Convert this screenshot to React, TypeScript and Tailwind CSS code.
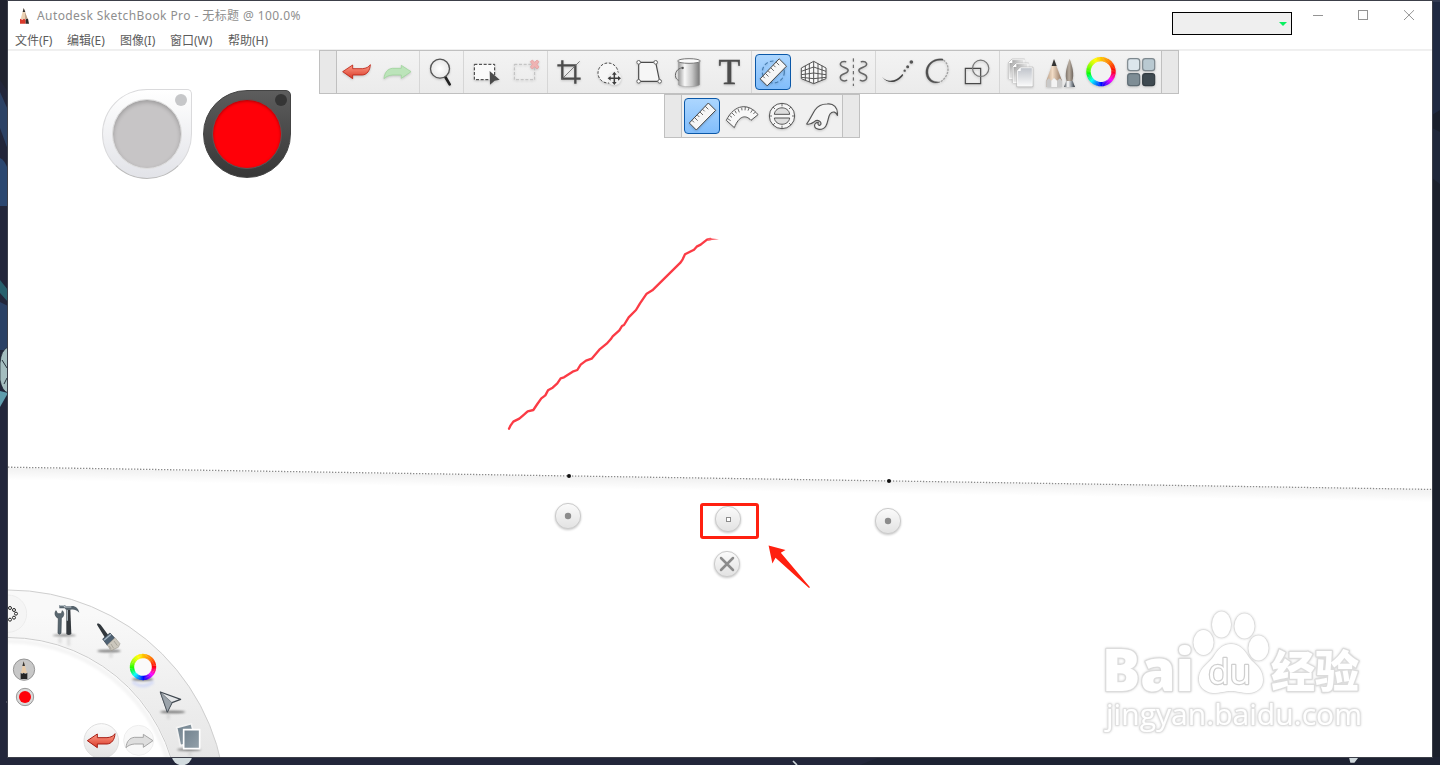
import type { ReactNode } from "react";

const hueStops: [number, number][] = [
  [0, 0], [45, 28], [90, 48], [135, 72], [180, 112], [225, 185], [270, 238], [315, 296], [360, 360],
];

function hueAt(angle: number) {
  for (let i = 1; i < hueStops.length; i++) {
    const [a1, h1] = hueStops[i];
    const [a0, h0] = hueStops[i - 1];
    if (angle <= a1) return h0 + ((angle - a0) / (a1 - a0)) * (h1 - h0);
  }
  return 0;
}

function ColorRing({ cx, cy, r, width }: { cx: number; cy: number; r: number; width: number }) {
  const steps = 60;
  return (
    <g fill="none" strokeWidth={width}>
      {Array.from({ length: steps }, (_, i) => {
        const a = (i * 360) / steps;
        const b = a + 360 / steps + 1;
        const p = (d: number) =>
          `${cx + r * Math.cos((d * Math.PI) / 180)} ${cy - r * Math.sin((d * Math.PI) / 180)}`;
        return <path key={i} d={`M${p(a)} A${r} ${r} 0 0 0 ${p(b)}`} stroke={`hsl(${hueAt(a)} 100% 50%)`} />;
      })}
    </g>
  );
}

/* Icons are drawn on shared artboards at three units per pixel; x and y pick the cell. */
function Cell({ x, y = 18, active, children }: { x: number; y?: number; active?: boolean; children: ReactNode }) {
  return (
    <button className="flex h-[42px] w-10 shrink-0 items-center justify-center">
      <span
        className={
          active
            ? "flex size-9 items-center justify-center rounded-[4px] border border-[#0b58a8] bg-linear-to-b from-[#acd6fe] to-[#81bdfb]"
            : "flex size-9 items-center justify-center"
        }
      >
        <svg viewBox={`${x} ${y} 120 126`} className="h-[42px] w-10 shrink-0 drop-shadow-[0_1px_1px_rgba(0,0,0,0.18)]">
          {children}
        </svg>
      </span>
    </button>
  );
}

function Section({ className, children }: { className: string; children: ReactNode }) {
  return <div className={`flex shrink-0 border-l ${className}`}>{children}</div>;
}

function Defs() {
  return (
    <svg className="absolute size-0">
      <defs>
        <linearGradient id="red" x2="0" y2="1">
          <stop stopColor="#ff9c88" />
          <stop offset="1" stopColor="#d83a28" />
        </linearGradient>
        <linearGradient id="metal">
          <stop stopColor="#999" />
          <stop offset=".3" stopColor="#f8f8f8" />
          <stop offset=".65" stopColor="#c5c5c5" />
          <stop offset="1" stopColor="#777" />
        </linearGradient>
        <linearGradient id="page" x2="1" y2="1">
          <stop stopColor="#8d8d8d" />
          <stop offset=".45" stopColor="#dcdcdc" />
          <stop offset="1" stopColor="#fff" />
        </linearGradient>
        <linearGradient id="pageFront" x2="0" y2="1">
          <stop stopColor="#bfc3ca" />
          <stop offset="1" stopColor="#fafafa" />
        </linearGradient>
        <linearGradient id="wood">
          <stop stopColor="#b89e86" />
          <stop offset=".4" stopColor="#f2dcc6" />
          <stop offset="1" stopColor="#8d715c" />
        </linearGradient>
        <linearGradient id="hair">
          <stop stopColor="#7d736a" />
          <stop offset=".45" stopColor="#b9ada0" />
          <stop offset="1" stopColor="#6d635b" />
        </linearGradient>
        <linearGradient id="chrome">
          <stop stopColor="#3e454d" />
          <stop offset=".35" stopColor="#fff" />
          <stop offset=".7" stopColor="#8a9199" />
          <stop offset="1" stopColor="#2c3238" />
        </linearGradient>
        <linearGradient id="ball" x2="0" y2="1">
          <stop stopColor="#fbfbfb" />
          <stop offset="1" stopColor="#e2e2e2" />
        </linearGradient>
        <linearGradient id="band" x2="0" y2=".45">
          <stop stopColor="#f9f9f9" />
          <stop offset="1" stopColor="#e2e2e2" />
        </linearGradient>
        <linearGradient id="photo" x2="1" y2="1">
          <stop stopColor="#71828e" />
          <stop offset="1" stopColor="#94a1aa" />
        </linearGradient>
        <linearGradient id="edge" x2="0" y2="1">
          <stop stopColor="#000" stopOpacity=".055" />
          <stop offset="1" stopColor="#000" stopOpacity="0" />
        </linearGradient>
        <radialGradient id="lens">
          <stop stopColor="#fff" />
          <stop offset="1" stopColor="#e8e8e8" />
        </radialGradient>
        <filter id="soft" x="-20%" y="-50%" width="140%" height="200%">
          <feGaussianBlur stdDeviation="2.5" />
        </filter>
        <filter id="haze" x="-10%" y="-10%" width="120%" height="120%">
          <feGaussianBlur stdDeviation=".8" />
        </filter>
      </defs>
    </svg>
  );
}

function Ruler({ dx = 0, dy = 0 }: { dx?: number; dy?: number }) {
  return (
    <g transform={`translate(${dx} ${dy})`} stroke="#454545" strokeLinejoin="round">
      <path d="M268 234 L325 174 L347 196 L289 255Z" fill="#f6f6f6" strokeWidth="3" />
      <path
        d="M276 226l6 6 M284 218l9 9 M292 210l6 6 M300 201l9 9 M308 193l6 6 M316 184l9 9"
        fill="none"
        strokeWidth="2.4"
      />
    </g>
  );
}

const leftArrow = "M98 80 L128 60 V71 H157 C169 70 177 66 181 59 C180 77 171 89 157 90 H128 V101Z";
const rightArrow = "M303 80 L274 61 V70 H247 C233 72 224 81 222 101 C229 94 237 91 248 90 H274 V100Z";

function MainToolbar() {
  return (
    <div className="absolute left-[311px] top-0 flex h-11 w-[860px] border border-[#c0c0c0] bg-linear-to-b from-[#f3f3f3] to-[#ebebeb]">
      <div className="w-4 shrink-0 bg-[#e8e8e8]" />
      <Section className="w-[83px] border-[#c0c0c0]">
        <Cell x={81}>
          <path d={leftArrow} fill="url(#red)" stroke="#bd2213" strokeWidth="2.5" strokeLinejoin="round" />
        </Cell>
        <Cell x={201}>
          <path d={rightArrow} fill="#bce4ba" stroke="#a0d59e" strokeWidth="2.5" strokeLinejoin="round" />
        </Cell>
      </Section>
      <Section className="w-[44px] border-[#d6d6d6] pl-px">
        <Cell x={333}>
          <path d="M406 96 L419 118" stroke="#222" strokeWidth="8" strokeLinecap="round" />
          <circle cx="390" cy="71" r="28.5" fill="url(#lens)" stroke="#555" strokeWidth="4" />
        </Cell>
      </Section>
      <Section className="w-[84px] border-[#d6d6d6] pl-px">
        <Cell x={465}>
          <path d="M493 58H554V104H493Z" fill="#fafafa" stroke="#333" strokeWidth="3" strokeDasharray="9 5" />
          <path d="M539 78 L569 104 L554 107 L540 119Z" fill="#4b4b4b" />
        </Cell>
        <Cell x={585}>
          <path d="M613 58H674V104H613Z" fill="none" stroke="#bdbdbd" strokeWidth="3" strokeDasharray="9 5" />
          <path
            d="M661 50l6-5 7 7 7-7 6 5-6 8 6 8-6 6-7-7-7 7-6-6 6-8Z"
            fill="#efb3b3"
            stroke="#e29a9a"
            strokeWidth="2"
          />
        </Cell>
      </Section>
      <Section className="w-[204px] border-[#d6d6d6] pl-px">
        <Cell x={717}>
          <path d="M757 46V101H812 M742 61H796V116" fill="none" stroke="#4b4b4b" strokeWidth="7" />
          <path d="M757 101L809 49" stroke="#666" strokeWidth="2.5" />
        </Cell>
        <Cell x={-33}>
          <circle cx="24" cy="84" r="30" fill="#f7f7f7" stroke="#444" strokeWidth="3" strokeDasharray="8 5" />
          <circle cx="43" cy="100" r="21" fill="#efefef" />
          <path d="M43 86V114M29 100H57" stroke="#3e3e3e" strokeWidth="4.5" />
          <path d="M43 80l7 9H36Z M43 120l7-9H36Z M23 100l9-7V107Z M63 100l-9-7V107Z" fill="#3e3e3e" />
        </Cell>
        <Cell x={87}>
          <path d="M116 52H167L179 109H116Z" fill="#f6f6f6" stroke="#4b4b4b" strokeWidth="3.5" />
          <g fill="#fff" stroke="#666" strokeWidth="3">
            <circle cx="116" cy="52" r="5.5" />
            <circle cx="167" cy="52" r="5.5" />
            <circle cx="179" cy="109" r="5.5" />
            <circle cx="116" cy="109" r="5.5" />
          </g>
        </Cell>
        <Cell x={207}>
          <path d="M235 50V119C243 127 290 127 299 119V50Z" fill="url(#metal)" stroke="#999" strokeWidth="1.5" />
          <ellipse cx="267" cy="48" rx="34" ry="7" fill="#fafafa" stroke="#777" strokeWidth="3" />
          <path d="M248 68C231 70 224 84 227 96C228 101 231 104 236 106" fill="none" stroke="#666" strokeWidth="3" />
          <circle cx="248" cy="69" r="3.5" fill="#555" />
        </Cell>
        <Cell x={327}>
          <text
            x="388"
            y="117"
            textAnchor="middle"
            fontSize="107"
            fill="#4d4d4d"
            stroke="#4d4d4d"
            strokeWidth="1.5"
            className="font-['Liberation_Serif',serif]"
          >
            T
          </text>
        </Cell>
      </Section>
      <Section className="w-[124px] border-[#d6d6d6] pl-px">
        <Cell x={459} active>
          <circle cx="520" cy="81" r="33" fill="none" stroke="#467caf" strokeWidth="3.5" strokeDasharray="11 7" />
          <Ruler dx={212.5} dy={-132.5} />
        </Cell>
        <Cell x={579}>
          <path d="M604 69L641 49L678 69V101L641 116L604 101Z" fill="#f8f8f8" stroke="#555" strokeWidth="3" />
          <path
            d="M641 49V116 M616 62V106 M628 56V111 M654 56V111 M666 62V106 M604 79L641 66L678 79 M604 89L641 84L678 89 M604 97L641 101L678 97"
            fill="none"
            stroke="#555"
            strokeWidth="3"
          />
        </Cell>
        <Cell x={699}>
          <g fill="none" stroke="#666" strokeLinecap="round">
            <path d="M737 50C720 48 716 60 728 65C740 70 749 73 742 81C736 88 719 86 721 99C722 106 731 110 740 106" strokeWidth="4.5" />
            <path d="M784 50C801 48 805 60 793 65C781 70 772 73 779 81C785 88 802 86 800 99C799 106 790 110 781 106" strokeWidth="4.5" />
            <path d="M760 40V123" strokeWidth="3" strokeDasharray="10 9" strokeLinecap="butt" stroke="#555" />
          </g>
        </Cell>
      </Section>
      <Section className="w-[124px] border-[#d6d6d6] pl-px">
        <Cell x={-9}>
          <path d="M6 95C22 115 50 109 67 87L70 90C52 117 21 118 6 95Z" fill="#444" />
          <g fill="#555">
            <circle cx="74" cy="77" r="3.5" />
            <circle cx="83" cy="65" r="4.5" />
            <circle cx="94" cy="51" r="5.5" />
          </g>
        </Cell>
        <Cell x={111}>
          <path d="M189 42C157 37 134 62 138 87C141 108 160 120 180 111C159 112 146 102 144 84C142 61 160 42 189 46Z" fill="#505050" stroke="#505050" />
          <path d="M190 45C210 58 210 92 181 111" fill="none" stroke="#a2a2a2" strokeWidth="4" strokeDasharray="7 3" />
        </Cell>
        <Cell x={231}>
          <path d="M256 70H302V116H256Z" fill="none" stroke="#484848" strokeWidth="3.5" />
          <circle cx="302" cy="70" r="24.5" fill="none" stroke="#777" strokeWidth="3.5" />
        </Cell>
      </Section>
      <Section className="w-[162px] border-[#d6d6d6] pl-px">
        <Cell x={363}>
          <g stroke="#fff" strokeWidth="3">
            <path d="M387 54L397 44H432V100H387Z" fill="url(#page)" />
            <path d="M399 66L409 56H444V112H399Z" fill="url(#page)" />
            <path d="M412 78L422 68H457V124H412Z" fill="url(#pageFront)" />
          </g>
          <g fill="none" stroke="#a9a9a9" strokeWidth="1.5">
            <path d="M385 101V53L396 42H434" />
            <path d="M397 113V65L408 54H446" />
            <path d="M410 125V77L421 66H459V125Z" />
          </g>
          <path d="M387 54L397 44V54Z M399 66L409 56V66Z M412 78L422 68V78Z" fill="#fff" />
        </Cell>
        <Cell x={483}>
          <path d="M499 126V107L522 44L546 107V126Z" fill="url(#wood)" />
          <path d="M515 63L522 42L530 63Z" fill="#333" />
          <path d="M499 107L506 100L514 107L522 99L531 107L540 100L546 107V126H499Z" fill="#c9c9c9" />
          <path d="M514 107L522 99L531 107V126H514Z" fill="#f3f3f3" />
          <path d="M569 41C577 64 584 86 577 109H560C553 86 561 64 569 41Z" fill="url(#hair)" />
          <path d="M559 108H578L585 126H552Z" fill="url(#chrome)" />
        </Cell>
        <Cell x={603}>
          <circle cx="663" cy="80" r="33" fill="#f2f2f2" />
          <ColorRing cx={663} cy={80} r={37.5} width={13} />
        </Cell>
        <Cell x={723}>
          <g strokeWidth="3.5">
            <rect x="743" y="41" width="36" height="36" rx="8" fill="#dce6ec" stroke="#7d888e" />
            <rect x="788" y="41" width="36" height="36" rx="8" fill="#b9c9d1" stroke="#7d888e" />
            <rect x="743" y="86" width="36" height="36" rx="8" fill="#7e8d95" stroke="#5e6c74" />
            <rect x="788" y="86" width="36" height="36" rx="8" fill="#3f4a51" stroke="#333c42" />
          </g>
        </Cell>
      </Section>
      <div className="grow border-l border-[#c0c0c0] bg-[#e8e8e8]" />
    </div>
  );
}

function GuideToolbar() {
  return (
    <div className="absolute left-[656px] top-11 flex h-11 w-[196px] border border-[#c0c0c0] bg-[#f0f0f0]">
      <div className="w-4 shrink-0 bg-[#e8e8e8]" />
      <Section className="w-[161px] border-[#c0c0c0]">
        <Cell x={246} y={150} active>
          <Ruler />
        </Cell>
        <Cell x={366} y={150}>
          <path
            d="M379 226C403 177 446 173 474 209L453 226C437 208 417 212 403 248Z"
            fill="#f8f8f8"
            stroke="#555"
            strokeWidth="3"
            strokeLinejoin="round"
          />
          <path
            d="M383 221l9 6 M389 212l7 5 M396 204l8 8 M405 197l4 8 M414 192l4 10 M425 188l1 8 M436 186l-1 10 M447 189l-3 8 M458 194l-6 9 M466 201l-6 6"
            stroke="#555"
            strokeWidth="2.6"
          />
        </Cell>
        <Cell x={486} y={150}>
          <circle cx="546" cy="213" r="38" fill="#f6f6f6" stroke="#555" strokeWidth="3" />
          <path d="M523 208C526 182 566 182 569 208Z M523 219C526 244 566 244 569 219Z" fill="#ddd" stroke="#555" strokeWidth="3" />
          <path
            d="M546 175v9 M546 242v9 M508 213h8 M576 213h8 M519 186l6 6 M573 186l-6 6 M519 240l6-6 M573 240l-6-6"
            stroke="#555"
            strokeWidth="2.6"
          />
        </Cell>
        <Cell x={606} y={150}>
          <path
            d="M620 237C631 222 637 207 645 195C654 182 667 177 681 177C700 174 715 188 712 211C709 202 699 196 690 207C681 219 687 254 657 253C639 251 640 232 655 232C652 240 658 244 662 239C666 229 653 222 643 230C635 236 628 240 620 237Z"
            fill="#f4f4f4"
            stroke="#555"
            strokeWidth="3.5"
            strokeLinejoin="round"
          />
        </Cell>
      </Section>
      <div className="grow border-l border-[#c0c0c0] bg-[#e8e8e8]" />
    </div>
  );
}

function Wheel() {
  return (
    <g>
      <circle cx="8" cy="808" r="194.5" fill="none" stroke="url(#band)" strokeWidth="47" />
      <circle cx="8" cy="808" r="218" fill="none" stroke="#cfcfcf" />
      <circle cx="8" cy="808" r="170.5" fill="#fff" stroke="#cdcdcd" />
      <circle cx="8" cy="808" r="167" fill="none" stroke="#000" strokeOpacity=".04" strokeWidth="5" filter="url(#haze)" />
      <g transform="translate(0 580) scale(.333333)">
        <circle cx="24" cy="101" r="56" fill="#f5f5f5" stroke="#ececec" strokeWidth="3" />
        <g fill="#fff" stroke="#222" strokeWidth="3">
          <circle cx="30" cy="84" r="4.5" />
          <circle cx="42" cy="90" r="4.5" />
          <circle cx="48" cy="101" r="4.5" />
          <circle cx="42" cy="113" r="4.5" />
          <circle cx="30" cy="119" r="4.5" />
        </g>

        <g fill="#000" filter="url(#soft)" opacity=".5">
          <ellipse cx="193" cy="166" rx="35" ry="3" />
          <ellipse cx="327" cy="213" rx="36" ry="4" />
          <ellipse cx="428" cy="298" rx="32" ry="5" />
          <ellipse cx="518" cy="396" rx="38" ry="4" />
          <ellipse cx="567" cy="509" rx="36" ry="4" />
        </g>
        <g opacity=".35" fill="none" strokeWidth="10" filter="url(#soft)">
          <path d="M180 172v18M206 172v25M333 217v16M505 402v16M570 515v12" stroke="#b8b8b8" />
          <path d="M398 305Q428 330 460 305" stroke="#a8b8ff" />
        </g>

        <path
          d="M168 92L173 101L184 101L187 92C194 99 192 109 184 115L183 160Q179 165 174 160L175 115C164 110 163 98 168 92Z"
          fill="#5a6871"
          stroke="#36424a"
          strokeWidth="2"
        />
        <path d="M199 88H211L214 162Q206 168 199 162Z" fill="#34393e" />
        <path d="M202 90V122" stroke="#a9b4bb" strokeWidth="4" />
        <path d="M178 75H194L198 78H212C225 76 235 83 238 98C229 89 220 87 212 89H198L194 85H178Z" fill="#56636c" />
        <path d="M179 77H193V81H214" fill="none" stroke="#ccd4d9" strokeWidth="3" />

        <path d="M292 136C288 128 298 129 303 136L324 164L315 173Z" fill="#32383d" />
        <path d="M308 177L330 159L344 174L322 196Z" fill="#4e6173" stroke="#28333e" strokeWidth="2" />
        <path d="M312 181l21-18" stroke="#a9b9c6" strokeWidth="4" />
        <path d="M322 195L345 173L360 191L355 202L333 212Z" fill="#cbc7bd" stroke="#8e897f" strokeWidth="1.5" />
        <path d="M333 192l8 13M342 183l10 14M328 198l6 10" stroke="#99948a" strokeWidth="2" />

        <circle cx="429" cy="261" r="30" fill="#fafafa" />
        <ColorRing cx={429} cy={261} r={33} width={13} />

        <path d="M481 336L542 358L516 368L502 396Z" fill="#e5e7e9" stroke="#3f474f" strokeWidth="3.5" strokeLinejoin="round" />
        <path d="M481 336L516 368L502 396Z" fill="#9ba3aa" stroke="#3f474f" strokeWidth="1.5" />

        <path d="M530 443L574 431L588 485L541 497Z" fill="url(#photo)" stroke="#f3f3f3" strokeWidth="5" />
        <path d="M551 449H599V506H551Z" fill="url(#photo)" stroke="#fff" strokeWidth="5" />

        <g strokeWidth="2.5">
          <circle cx="72" cy="269" r="32" fill="#c8c8c8" stroke="#888" />
          <path d="M63 279L71 244L81 279Z" fill="#e8cba9" />
          <path d="M67 258L71 244L75 258Z" fill="#333" />
          <path d="M62 278Q67 284 71 278Q76 284 82 278V297H62Z" fill="#252525" />
          <circle cx="75" cy="351" r="26" fill="#d9d9d9" stroke="#888" />
        </g>
        <circle cx="75" cy="351" r="18" fill="#ff0008" />

        <circle cx="304" cy="483" r="52" fill="url(#ball)" stroke="#dedede" strokeWidth="3" />
        <circle cx="416" cy="481" r="45" fill="#f8f8f8" stroke="#eeeeee" strokeWidth="3" />
        <path d={leftArrow} transform="translate(164 402)" fill="url(#red)" stroke="#a61d14" strokeWidth="3" strokeLinejoin="round" />
        <path d={rightArrow} transform="translate(156 402)" fill="#dedede" stroke="#a5a5a5" strokeWidth="3" strokeLinejoin="round" />
      </g>
    </g>
  );
}

function Handle({ cx, cy, children }: { cx: number; cy: number; children: ReactNode }) {
  return (
    <g>
      <circle cx={cx} cy={cy + 1} r="13" fill="#000" opacity=".22" filter="url(#haze)" />
      <circle cx={cx} cy={cy} r="12.6" fill="url(#ball)" stroke="#cccccc" strokeWidth="1" />
      {children}
    </g>
  );
}

function Watermark() {
  const text = "font-['Open_Sans','Noto_Sans_CJK_SC',sans-serif]";
  return (
    <g
      fill="#fff"
      stroke="#dcdcdc"
      strokeLinejoin="round"
      paintOrder="stroke"
      className="drop-shadow-[0_0_1px_rgba(0,0,0,0.16)]"
    >
      <text x="1102" y="691" fontSize="59" fontWeight="800" textLength="92" lengthAdjust="spacingAndGlyphs" strokeWidth="2.6" className={text}>
        Bai
      </text>
      <text x="1271" y="687.5" fontSize="44" fontWeight="900" textLength="88" lengthAdjust="spacingAndGlyphs" strokeWidth="2.6" className="font-['Noto_Sans_CJK_SC',sans-serif]">
        经验
      </text>
      <text x="1106" y="725" fontSize="29.5" fontWeight="500" textLength="256" lengthAdjust="spacingAndGlyphs" stroke="#e0e0e0" strokeWidth="2.2" className={text}>
        jingyan.baidu.com
      </text>
      <g strokeWidth="1.6">
        <ellipse cx="1203.5" cy="642.5" rx="10" ry="12.5" />
        <ellipse cx="1221.5" cy="624.5" rx="9.5" ry="13" />
        <ellipse cx="1244.5" cy="626" rx="10" ry="12.5" />
        <ellipse cx="1258.5" cy="648" rx="10" ry="12.5" />
        <path d="M1231 644C1239 644 1244 649 1248 656C1252 663 1263 667 1263 680C1263 688 1256 693 1249 693C1241 693 1238 691 1231 691C1224 691 1221 693 1213 693C1204 692 1198 686 1199 677C1200 667 1210 663 1214 656C1218 649 1223 644 1231 644Z" />
      </g>
      <text x="1208" y="684" fontSize="34" fontWeight="500" textLength="43" lengthAdjust="spacingAndGlyphs" stroke="#cfcfcf" strokeWidth="2.4" className={text}>
        du
      </text>
    </g>
  );
}

function Drawing() {
  return (
    <svg viewBox="8 50 1424 707" className="absolute left-0 top-0 h-[707px] w-[1424px]">
      <path d="M8 50.5H1432" stroke="#f0f0f0" />
      <path
        transform="translate(490 220) scale(.333333)"
        d="M57 626L62 616L70 605L88 596L102 584L113 574L130 570L142 552L154 535L166 526L174 511L188 503L202 490L212 475L222 472L248 455L262 450L272 434L288 422L305 416L328 389L350 371L362 358L368 349L388 331L396 318L402 315L416 292L438 270L450 250L470 221L487 211L572 127L578 118L585 103L612 89L620 80L632 74L651 59L661 57"
        fill="none"
        stroke="#fb3b45"
        strokeWidth="7"
        strokeLinejoin="round"
        strokeLinecap="round"
      />
      <path d="M708 238L719 239.3L708 240.5Z" fill="#fb5b63" />

      <g transform="rotate(.895 8 467.2)">
        <rect x="8" y="468" width="1440" height="12" fill="url(#edge)" />
        <path d="M8 467.2H1440" stroke="#8c8c8c" strokeWidth="1.3" strokeDasharray="1.4 1.6" />
      </g>
      <circle cx="569" cy="476" r="2" fill="#111" />
      <circle cx="889" cy="481" r="2" fill="#111" />

      <Handle cx={568} cy={516}>
        <circle cx="568" cy="516" r="3.2" fill="#8c8c8c" />
      </Handle>
      <Handle cx={728} cy={519}>
        <rect x="726.5" y="517.5" width="4" height="4" fill="#fff" stroke="#8c8c8c" />
      </Handle>
      <Handle cx={888} cy={521}>
        <circle cx="888" cy="521" r="3.2" fill="#8c8c8c" />
      </Handle>
      <Handle cx={727} cy={564}>
        <path d="M721 558L733 570M733 558L721 570" stroke="#8c8c8c" strokeWidth="2.5" strokeLinecap="round" />
      </Handle>

      <rect x="701.5" y="504.5" width="56" height="33" rx="1.5" fill="none" stroke="#ff2010" strokeWidth="3" />
      <path d="M768.6 545.6L785.5 550L780.8 552.7L810 587.2L809 588L775.5 557.8L772.4 563.5Z" fill="#ff2010" />

      <Wheel />
      <Watermark />
    </svg>
  );
}

function Desktop() {
  return (
    <svg viewBox="0 0 1440 765" className="absolute inset-0 h-[765px] w-[1440px]">
      <rect width="1440" height="765" fill="#22263a" />
      <path d="M0 0H8V92L0 80Z" fill="#20232f" />
      <path d="M0 92L8 110V150L0 128Z" fill="#2c4265" />
      <path d="M0 158Q5 160 8 170V206H0Z" fill="#2b4770" />
      <path d="M0 280L8 290V302L0 293Z" fill="#28606d" />
      <path d="M0 302L8 306V350H0Z" fill="#2a4165" />
      <path d="M8 347Q1 350 0 363V380Q2 391 8 393Z" fill="#a4bdbf" stroke="#18202c" strokeWidth=".7" />
      <path d="M2 360l5 8M4 384l3-6" stroke="#26323c" />
      <path d="M0 391L8 393L0 407Z" fill="#5f9dad" />
      <path d="M1432 0H1440V765H1432Z" fill="#1b202c" />
      <path d="M1432 0H1440V110L1432 115Z" fill="#202a42" />
      <path d="M1432 128L1440 132V184L1432 178Z" fill="#20283b" />
      <path d="M880 757H1440V765H860Z" fill="#1d2232" />
      <path d="M1000 0H1440V2H1000Z" fill="#333b52" />
      <circle cx="182" cy="755" r="10.3" fill="#d2dbdf" />
      <path d="M793 761l4 4M1350 758l7 0-3 4h-3Z" stroke="#cfd8dc" strokeWidth="1.6" fill="#cfd8dc" />
      <circle cx="7.5" cy="702" r="1" fill="#aaa" />
    </svg>
  );
}

const menus = [
  { label: "文件(F)", width: "w-[52px]" },
  { label: "编辑(E)", width: "w-[53px]" },
  { label: "图像(I)", width: "w-[50px]" },
  { label: "窗口(W)", width: "w-[58px]" },
  { label: "帮助(H)", width: "w-[50px]" },
];

function Header() {
  return (
    <header className="flex h-[49px] shrink-0 justify-between border-b border-[#efefef] font-['Noto_Sans','Noto_Sans_CJK_SC',sans-serif]">
      <div>
        <div className="flex h-[30px] items-center pl-2.5">
          <svg viewBox="54 19 36 57" className="mr-[7px] h-[19px] w-3">
            <path d="M62 55L71 22L83 55Z" fill="#ecd2b4" />
            <path d="M68 34L71 22L76 34Z" fill="#333" />
            <path d="M75 34L83 55H76Z" fill="#b49c86" />
            <path d="M60 54L67 57L72 54L77 57V69H60Z" fill="#d83a2c" />
            <path d="M77 56L84 54L87 69H77Z" fill="#2b2b2b" />
          </svg>
          <span className="whitespace-nowrap text-[12px] tracking-[0.41px] text-[#8e8e8e]">
            Autodesk SketchBook Pro - 无标题 @ 100.0%
          </span>
        </div>
        <nav className="mt-px flex h-[18px] items-center pl-[7px] text-[12px] text-[#5c5c5c]">
          {menus.map((m) => (
            <span key={m.label} className={`whitespace-nowrap ${m.width}`}>
              {m.label}
            </span>
          ))}
        </nav>
      </div>
      <div className="flex">
        <div className="mr-[21px] mt-[11px] flex h-[23px] w-[120px] items-center justify-end border border-black bg-[#efefef] pr-1">
          <svg viewBox="0 0 8 4" className="h-1 w-2">
            <path d="M0 0H8L4 4Z" fill="#08f060" />
          </svg>
        </div>
        <svg viewBox="1313 1 119 30" className="h-[30px] w-[119px]" fill="none" stroke="#949494" strokeWidth="1">
          <path d="M1313 15.5H1323" />
          <rect x="1358.5" y="10.5" width="9" height="9" />
          <path d="M1404 10.2L1414 20M1414 10.2L1404 20" />
        </svg>
      </div>
    </header>
  );
}

export default function App() {
  return (
    <div className="relative h-[765px] w-[1440px] overflow-hidden">
      <Desktop />
      <Defs />
      <div className="relative px-2 pt-px">
        <div className="flex h-[756px] flex-col bg-white outline outline-[#3c3f49]">
          <Header />
          <main className="relative h-[707px] overflow-hidden">
            <Drawing />
            <div className="absolute left-[94px] top-[39px] size-[90px] rounded-[45px_5px_45px_45px] border border-[#dadadc] border-b-[#bbb] bg-linear-to-b from-white to-[#e2e3e8] p-[9px]">
              <div className="size-[70px] rounded-full border border-[#dedede] bg-[#c7c5c6] shadow-[inset_0_2px_4px_rgba(0,0,0,0.22)]" />
              <div className="absolute right-1 top-1 size-3 rounded-full bg-[#c6c7c9]" />
            </div>
            <div className="absolute left-[195px] top-10 size-[88px] rounded-[44px_5px_44px_44px] border border-[#444] bg-linear-to-b from-[#5d5d5d] to-[#373737] p-2">
              <div className="size-[70px] rounded-full border border-[#565656] bg-[#ff0008] shadow-[inset_0_1px_3px_rgba(0,0,0,0.35)]" />
              <div className="absolute right-[3px] top-[3px] size-3 rounded-full bg-[#353535]" />
            </div>
            <MainToolbar />
            <GuideToolbar />
          </main>
        </div>
      </div>
    </div>
  );
}
